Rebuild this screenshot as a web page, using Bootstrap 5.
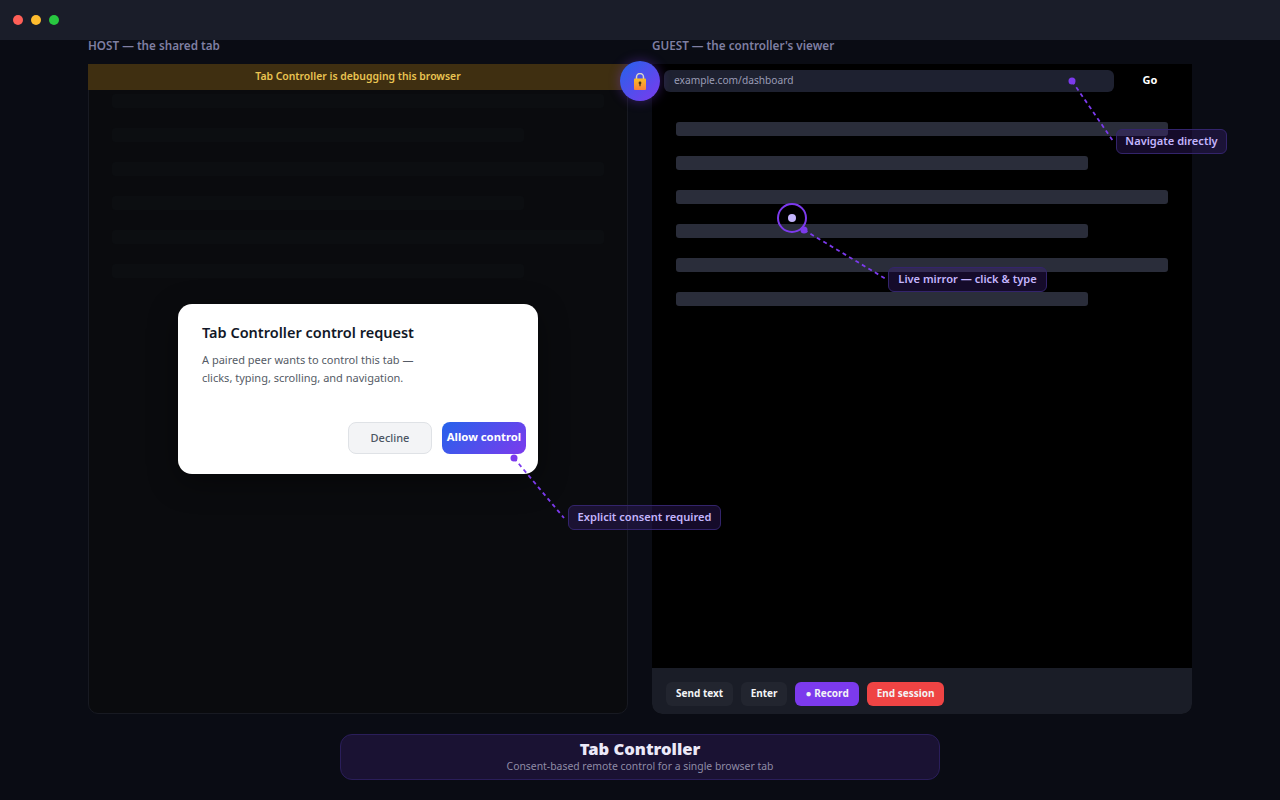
<!DOCTYPE html>
<html lang="en">
<head>
<meta charset="utf-8">
<title>Tab Controller</title>
<link href="https://cdn.jsdelivr.net/npm/bootstrap@5.3.0/dist/css/bootstrap.min.css" rel="stylesheet">
<style>
html,body{height:100%}
body{width:1280px;height:800px;overflow:hidden;background:#0a0c14;font-family:"Noto Sans","Open Sans",sans-serif;color:#fff;position:relative}
.tbar{height:40px;background:#1a1d29;padding-left:13px;gap:8px}
.tl{width:10px;height:10px;border-radius:50%}
.stage{height:674px;padding:0 88px;gap:24px}
.col-wrap{width:540px}
.lbl{height:24px;font-size:11.7px;font-weight:600;color:#7f7fa2;line-height:11px}
.pnl{height:650px;position:relative}
.pnl-h{background:#0a0b0e;border:1px solid #181a22;border-radius:10px}
.pnl-g{background:#000;border-radius:0 0 10px 10px}
.bnr{height:26px;margin:-1px -1px 0;background:#3f2f11;color:#eac452;font-size:10.4px;font-weight:600;padding-bottom:1px}
.hbars{padding:4px 23px 0;gap:20px}
.hb{height:14px;border-radius:3px;background:#0c0e11}
.gbars{padding:30px 24px 0;gap:20px}
.gb{height:14px;border-radius:3px;background:#2a2d3a}
.w-l{width:492px}.w-s{width:412px}
.ubar{height:28px;padding:6px 0 0 12px}
.url{width:450px;height:22px;border-radius:6px;background:#1e2130;color:#9a9cb5;font-size:10.2px;padding-left:10px}
.go{width:72px;height:22px;font-size:11px;font-weight:700;padding-bottom:2px}
.tools{height:46px;background:#1a1d27;padding:5px 0 0 14px;gap:8px;border-radius:0 0 10px 10px}
.tb{height:24px;border-radius:6px;font-size:10px;font-weight:700;color:#f3f4f6;background:#22252f;border:0;padding:0 10px 2px;line-height:1}
.tb-n{padding:0 9.5px 2px}
.tb-r{background:#7c3aed;padding:0 10.5px 2px}.tb-e{background:#ef4444;padding:0 9.5px 2px}
.gfill{flex:1}
.mdl{width:360px;height:170px;background:#fff;border-radius:14px;padding:19px 24px 0;box-shadow:0 8px 30px rgba(0,0,0,.4)}
.mdl-t{font-size:14.5px;font-weight:600;color:#111827;line-height:18px;margin-bottom:10px}
.mdl-p{font-size:11px;color:#555b66;line-height:18px;width:240px}
.mdl-btns{position:absolute;right:12px;top:118px;gap:10px}
.b-no,.b-ok{width:84px;height:32px;border-radius:8px;font-size:11px;font-weight:500;padding:0 0 2px;line-height:1}
.b-no{background:#f3f4f6;border:1.5px solid #dfe2e6;color:#4b5563}
.b-ok{background:linear-gradient(135deg,#2563eb,#7c3aed);border:0;color:#fff;font-weight:700;font-size:11.3px}
.foot{width:600px;height:46px;margin:20px auto 0;background:#1a1233;border:1px solid #2a1e5a;border-radius:12px;padding-top:4px}
.foot-t{font-size:16.6px;font-weight:900;color:#ece9f8;line-height:19px}
.foot-s{font-size:10.4px;color:#8f8ca6;line-height:16px}
.lock{position:absolute;left:620px;top:61px;width:40px;height:40px;border-radius:50%;background:linear-gradient(135deg,#2563eb,#7c3aed);box-shadow:0 0 12px rgba(124,58,237,.4)}
.ovl{position:absolute;left:0;top:0;width:1280px;height:800px;pointer-events:none}
.tip{position:absolute;height:25px;border:1px solid #33246b;border-radius:6px;background:rgba(70,36,140,.3);color:#c4b5fd;font-size:11.1px;font-weight:600;line-height:21px;text-align:center;white-space:nowrap}
.t1{left:1116px;top:129px;width:111px}
.t2{left:888px;top:267px;width:159px}
.t3{left:568px;top:505px;width:153px}
</style>
</head>
<body>
<div class="tbar d-flex align-items-center">
  <span class="tl" style="background:#ff5f57"></span>
  <span class="tl" style="background:#febc2e"></span>
  <span class="tl" style="background:#28c840"></span>
</div>
<div class="stage d-flex">
  <div class="col-wrap">
    <div class="lbl">HOST — the shared tab</div>
    <div class="pnl pnl-h">
      <div class="bnr d-flex align-items-center justify-content-center">Tab Controller is debugging this browser</div>
      <div class="hbars d-flex flex-column">
        <div class="hb w-l"></div><div class="hb w-s"></div><div class="hb w-l"></div><div class="hb w-s"></div><div class="hb w-l"></div><div class="hb w-s"></div>
      </div>
      <div class="mdl position-absolute top-50 start-50 translate-middle">
        <div class="mdl-t">Tab Controller control request</div>
        <div class="mdl-p">A paired peer wants to control this tab — clicks, typing, scrolling, and navigation.</div>
        <div class="mdl-btns d-flex">
          <button class="btn b-no">Decline</button>
          <button class="btn b-ok">Allow control</button>
        </div>
      </div>
    </div>
  </div>
  <div class="col-wrap">
    <div class="lbl">GUEST — the controller's viewer</div>
    <div class="pnl pnl-g d-flex flex-column">
      <div class="ubar d-flex">
        <div class="url d-flex align-items-center">example.com/dashboard</div>
        <div class="go d-flex align-items-center justify-content-center">Go</div>
      </div>
      <div class="gbars d-flex flex-column gfill">
        <div class="gb w-l"></div><div class="gb w-s"></div><div class="gb w-l"></div><div class="gb w-s"></div><div class="gb w-l"></div><div class="gb w-s"></div>
      </div>
      <div class="tools d-flex align-items-center">
        <button class="tb">Send text</button>
        <button class="tb tb-n">Enter</button>
        <button class="tb tb-r">● Record</button>
        <button class="tb tb-e">End session</button>
      </div>
    </div>
  </div>
</div>
<div class="foot text-center">
  <div class="foot-t">Tab Controller</div>
  <div class="foot-s">Consent-based remote control for a single browser tab</div>
</div>
<div class="lock d-flex align-items-center justify-content-center">
  <svg width="12" height="17" viewBox="0 0 12 17" aria-hidden="true">
    <defs><linearGradient id="lg" x1="0" y1="0" x2="0" y2="1"><stop offset="0" stop-color="#fbbf24"/><stop offset="1" stop-color="#fb7f3c"/></linearGradient></defs>
    <path d="M2.5 7V4a3.5 3.5 0 0 1 7 0v3" fill="none" stroke="#d8d4c8" stroke-width="1.5"/>
    <rect x="0" y="5.5" width="12" height="11.5" rx="1" fill="url(#lg)"/>
    <circle cx="6" cy="10" r="1.4" fill="#4a3218"/><rect x="5.4" y="10" width="1.2" height="3.2" fill="#4a3218"/>
  </svg>
</div>
<svg class="ovl" viewBox="0 0 1280 800" aria-hidden="true">
  <g stroke="#7c3aed" stroke-width="1.8" stroke-dasharray="4 3.5" fill="none">
    <line x1="1072" y1="81" x2="1113" y2="141"/>
    <line x1="804" y1="230" x2="886" y2="279"/>
    <line x1="514" y1="458" x2="564" y2="518"/>
  </g>
  <g fill="#7c3aed">
    <circle cx="1072" cy="81" r="3.5"/>
    <circle cx="804" cy="230" r="3.5"/>
    <circle cx="514" cy="458" r="3.5"/>
  </g>
  <circle cx="792" cy="218" r="14" fill="none" stroke="#7c3aed" stroke-width="2"/>
  <circle cx="792" cy="218" r="4" fill="#c4b5fd"/>
</svg>
<div class="tip t1">Navigate directly</div>
<div class="tip t2">Live mirror — click &amp; type</div>
<div class="tip t3">Explicit consent required</div>
<script src="https://cdn.jsdelivr.net/npm/bootstrap@5.3.0/dist/js/bootstrap.bundle.min.js"></script>
</body>
</html>
